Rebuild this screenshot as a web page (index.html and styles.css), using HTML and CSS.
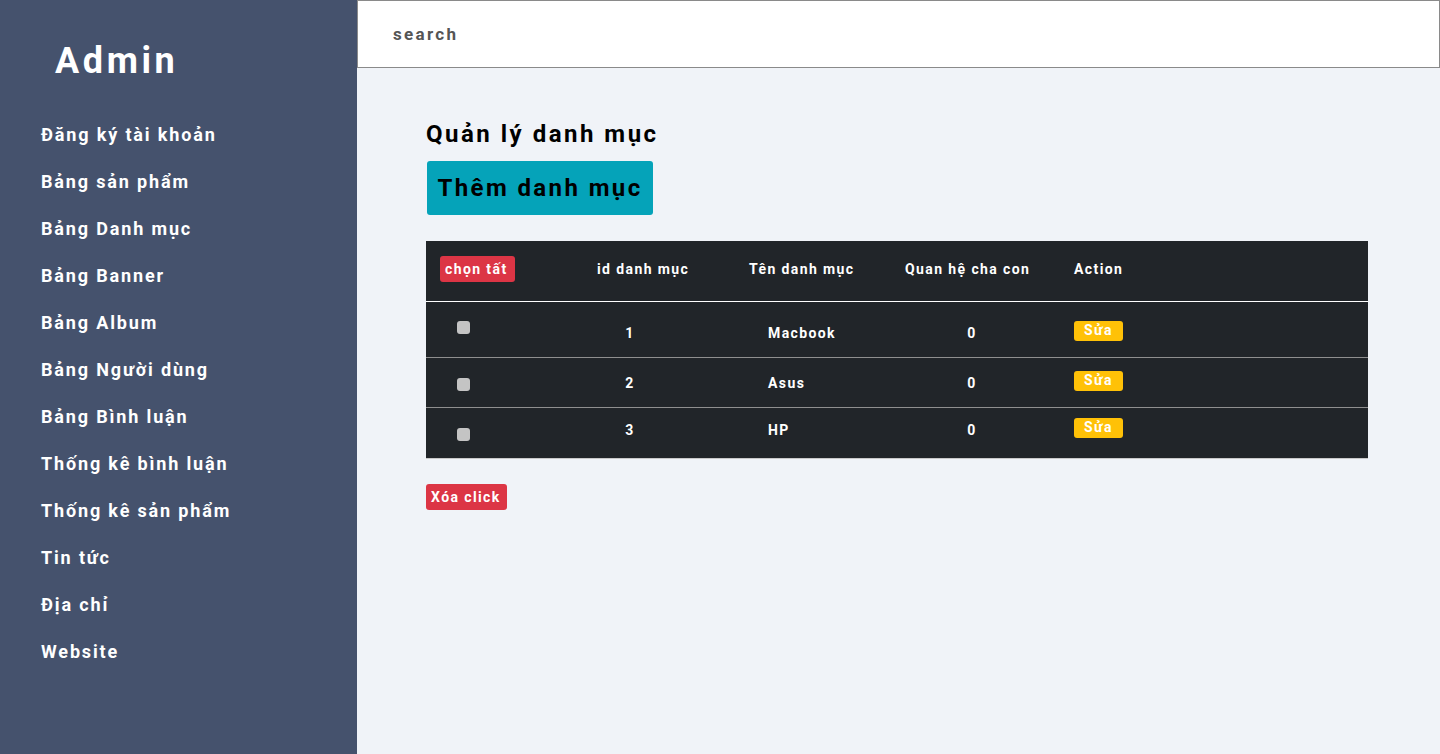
FILE: index.html
```html
<!DOCTYPE html>
<html lang="vi">
<head>
<meta charset="utf-8">
<title>Admin</title>
<link rel="stylesheet" href="styles.css">
</head>
<body>
<div class="layout">
  <aside class="sidebar">
    <div class="brand">Admin</div>
    <nav class="menu">
      <a href="#">Đăng ký tài khoản</a>
      <a href="#">Bảng sản phẩm</a>
      <a href="#">Bảng Danh mục</a>
      <a href="#">Bảng Banner</a>
      <a href="#">Bảng Album</a>
      <a href="#">Bảng Người dùng</a>
      <a href="#">Bảng Bình luận</a>
      <a href="#">Thống kê bình luận</a>
      <a href="#">Thống kê sản phẩm</a>
      <a href="#">Tin tức</a>
      <a href="#">Địa chỉ</a>
      <a href="#">Website</a>
    </nav>
  </aside>
  <main class="main">
    <div class="searchbar"><span class="search-text">search</span></div>
    <section class="content">
      <h1 class="title">Quản lý danh mục</h1>
      <button class="btn-add">Thêm danh mục</button>
      <div class="table">
        <div class="thead">
          <div class="hc"><span class="btn-red">chọn tất</span></div>
          <div class="hc">id danh mục</div>
          <div class="hc">Tên danh mục</div>
          <div class="hc">Quan hệ cha con</div>
          <div class="hc">Action</div>
        </div>
        <div class="trow r1">
          <div class="c c-check"><span class="check"></span></div>
          <div class="c c-id">1</div>
          <div class="c c-name">Macbook</div>
          <div class="c c-rel">0</div>
          <div class="c c-act"><span class="btn-edit">Sửa</span></div>
        </div>
        <div class="trow r2">
          <div class="c c-check"><span class="check"></span></div>
          <div class="c c-id">2</div>
          <div class="c c-name">Asus</div>
          <div class="c c-rel">0</div>
          <div class="c c-act"><span class="btn-edit">Sửa</span></div>
        </div>
        <div class="trow r3">
          <div class="c c-check"><span class="check"></span></div>
          <div class="c c-id">3</div>
          <div class="c c-name">HP</div>
          <div class="c c-rel">0</div>
          <div class="c c-act"><span class="btn-edit">Sửa</span></div>
        </div>
      </div>
      <button class="btn-del">Xóa click</button>
    </section>
  </main>
</div>
</body>
</html>
```

FILE: styles.css
```css
* { box-sizing: border-box; }
html, body { margin: 0; padding: 0; }
body {
  font-family: Roboto, "Noto Sans", sans-serif;
  background: #f0f3f8;
}
.layout {
  display: flex;
  height: 754px;
}
.sidebar {
  width: 357px;
  flex: none;
  background: #45526d;
  color: #fff;
}
.brand {
  font-size: 36px;
  font-weight: 700;
  letter-spacing: 3.6px;
  padding: 39px 0 0 55px;
  line-height: 44px;
}
.menu {
  display: flex;
  flex-direction: column;
  padding: 28px 0 0 41px;
}
.menu a {
  color: #fff;
  text-decoration: none;
  font-size: 18px;
  font-weight: 700;
  letter-spacing: 1.85px;
  line-height: 47px;
  height: 47px;
}
.main {
  flex: 1;
  display: flex;
  flex-direction: column;
}
.searchbar {
  height: 68px;
  background: #fff;
  border: 1px solid #8a8a8a;
  display: flex;
  align-items: center;
  padding-left: 35px;
}
.search-text {
  font-size: 17px;
  font-weight: 700;
  letter-spacing: 2.3px;
  color: #555;
}
.content {
  padding: 50px 0 0 69px;
  display: flex;
  flex-direction: column;
  align-items: flex-start;
}
.title {
  margin: 0;
  font-size: 24px;
  font-weight: 700;
  letter-spacing: 2.5px;
  line-height: 32px;
  color: #000;
}
.btn-add {
  margin: 11px 0 0 1px;
  width: 226px;
  height: 54px;
  border: none;
  border-radius: 3px;
  background: #05a3b9;
  color: #000;
  font-family: inherit;
  font-size: 24px;
  font-weight: 700;
  letter-spacing: 2.4px;
  padding: 0;
}
.table {
  margin-top: 26px;
  width: 942px;
  background: #212529;
  color: #fff;
  border-bottom: 1px solid #c9c9c9;
}
.thead {
  display: grid;
  grid-template-columns: 171px 152px 156px 169px 1fr;
  height: 61px;
  padding-bottom: 4px;
  align-items: center;
  border-bottom: 1px solid #ffffff;
  font-size: 14px;
  font-weight: 700;
  letter-spacing: 1.4px;
}
.hc:first-child { padding-left: 14px; }
.btn-red {
  display: inline-block;
  background: #dc3545;
  color: #fff;
  border-radius: 3px;
  padding: 0 7px 0 5px;
  height: 26px;
  line-height: 26px;
}
.trow {
  display: grid;
  grid-template-columns: 171px 66px 264px 90px 1fr;
  align-items: center;
  border-bottom: 1px solid #8f8f8f;
  font-size: 14px;
  font-weight: 700;
  letter-spacing: 1.4px;
}
.trow:last-child { border-bottom: none; }
.r1 { height: 56px; padding-top: 6px; }
.r2 { height: 50px; }
.r3 { height: 50px; padding-bottom: 6px; }
.c-check { padding-left: 31px; display: flex; }
.check {
  width: 13px;
  height: 13px;
  border-radius: 3px;
  background: #c4c4c4;
}
.r1 .check { margin-top: -10px; }
.r2 .check { margin-top: 3px; }
.r3 .check { margin-top: 9px; }
.c-id { text-align: center; }
.c-name { padding-left: 105px; }
.c-rel { text-align: center; }
.c-act { padding-left: 57px; display: flex; }
.btn-edit {
  display: inline-block;
  width: 49px;
  height: 20px;
  line-height: 19px;
  text-align: center;
  background: #ffc107;
  border-radius: 3px;
  font-size: 14px;
  margin-top: -4px;
}
.btn-del {
  margin-top: 25px;
  height: 26px;
  padding: 0 6px 0 5px;
  border: none;
  border-radius: 3px;
  background: #dc3545;
  color: #fff;
  font-family: inherit;
  font-size: 14px;
  font-weight: 700;
  letter-spacing: 1.4px;
}
```
